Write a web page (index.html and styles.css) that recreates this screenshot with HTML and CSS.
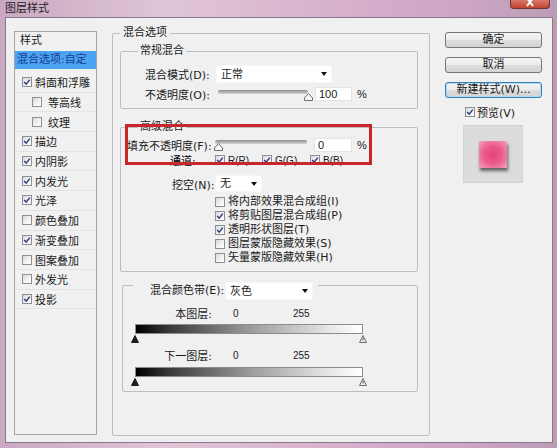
FILE: index.html
```html
<!DOCTYPE html>
<html lang="zh-CN">
<head>
<meta charset="utf-8">
<title>图层样式</title>
<link rel="stylesheet" href="styles.css">
</head>
<body>
<div class="window">
  <div class="titlebar">
    <span class="title">图层样式</span>
    <span class="close"><svg class="close-x" viewBox="0 0 12 8"><path d="M3 -2 L9 6 M9 -2 L3 6"/></svg></span>
  </div>
  <div class="client">
    <div class="styles-list">
      <div class="list-head">样式</div>
      <div class="list-sel">混合选项:自定</div>
      <div class="list-item"><span class="cb on"><svg viewBox="0 0 8 8"><path d="M1.2 4 L3.2 6.2 L6.8 1.6"/></svg></span>斜面和浮雕</div>
      <div class="list-item sub"><span class="cb"></span>等高线</div>
      <div class="list-item sub"><span class="cb"></span>纹理</div>
      <div class="list-item"><span class="cb on"><svg viewBox="0 0 8 8"><path d="M1.2 4 L3.2 6.2 L6.8 1.6"/></svg></span>描边</div>
      <div class="list-item"><span class="cb on"><svg viewBox="0 0 8 8"><path d="M1.2 4 L3.2 6.2 L6.8 1.6"/></svg></span>内阴影</div>
      <div class="list-item"><span class="cb on"><svg viewBox="0 0 8 8"><path d="M1.2 4 L3.2 6.2 L6.8 1.6"/></svg></span>内发光</div>
      <div class="list-item"><span class="cb on"><svg viewBox="0 0 8 8"><path d="M1.2 4 L3.2 6.2 L6.8 1.6"/></svg></span>光泽</div>
      <div class="list-item"><span class="cb"></span>颜色叠加</div>
      <div class="list-item"><span class="cb on"><svg viewBox="0 0 8 8"><path d="M1.2 4 L3.2 6.2 L6.8 1.6"/></svg></span>渐变叠加</div>
      <div class="list-item"><span class="cb"></span>图案叠加</div>
      <div class="list-item"><span class="cb"></span>外发光</div>
      <div class="list-item"><span class="cb on"><svg viewBox="0 0 8 8"><path d="M1.2 4 L3.2 6.2 L6.8 1.6"/></svg></span>投影</div>
    </div>

    <fieldset class="group main">
      <legend class="lg-main">混合选项</legend>

      <fieldset class="group normal">
        <legend class="lg-sub">常规混合</legend>
        <div class="normal-rows">
          <div class="row r18">
            <span class="lbl w71">混合模式(D):</span>
            <span class="select w116">正常<i class="arrow"></i></span>
          </div>
          <div class="row r15 mt3">
            <span class="lbl w71">不透明度(O):</span>
            <span class="slider s90 ml2">
              <span class="track"></span>
              <span class="thumbrow end"><svg class="thumb tr" viewBox="0 0 9 8"><path d="M4.5 0.5 L8.5 5 V7.5 H0.5 V5 Z"/></svg></span>
            </span>
            <span class="numbox w37">100</span>
            <span class="pct">%</span>
          </div>
        </div>
      </fieldset>

      <fieldset class="group adv">
        <legend class="lg-sub">高级混合</legend>
        <div class="row r14 fill-row">
          <span class="lbl w88">填充不透明度(F):</span>
          <span class="slider s92">
            <span class="track"></span>
            <span class="thumbrow"><svg class="thumb tl" viewBox="0 0 9 8"><path d="M4.5 0.5 L8.5 5 V7.5 H0.5 V5 Z"/></svg></span>
          </span>
          <span class="numbox w38">0</span>
          <span class="pct">%</span>
        </div>
        <div class="row r14 chan-row">
          <span class="lbl w45 strong">通道:</span>
          <span class="chan w47"><span class="cb on"><svg viewBox="0 0 8 8"><path d="M1.2 4 L3.2 6.2 L6.8 1.6"/></svg></span>R(R)</span>
          <span class="chan w48"><span class="cb on"><svg viewBox="0 0 8 8"><path d="M1.2 4 L3.2 6.2 L6.8 1.6"/></svg></span>G(G)</span>
          <span class="chan"><span class="cb on"><svg viewBox="0 0 8 8"><path d="M1.2 4 L3.2 6.2 L6.8 1.6"/></svg></span>B(B)</span>
        </div>
        <div class="row r17 ko-row">
          <span class="lbl w43">挖空(N):</span>
          <span class="select w47">无<i class="arrow"></i></span>
        </div>
        <div class="opts">
          <div class="opt"><span class="cb"></span>将内部效果混合成组(I)</div>
          <div class="opt"><span class="cb on"><svg viewBox="0 0 8 8"><path d="M1.2 4 L3.2 6.2 L6.8 1.6"/></svg></span>将剪贴图层混合成组(P)</div>
          <div class="opt"><span class="cb on"><svg viewBox="0 0 8 8"><path d="M1.2 4 L3.2 6.2 L6.8 1.6"/></svg></span>透明形状图层(T)</div>
          <div class="opt"><span class="cb"></span>图层蒙版隐藏效果(S)</div>
          <div class="opt"><span class="cb"></span>矢量蒙版隐藏效果(H)</div>
        </div>
      </fieldset>

      <fieldset class="group band">
        <legend class="lg-band">
          <span class="band-head">
            <span class="lbl w75">混合颜色带(E):</span>
            <span class="select w88">灰色<i class="arrow"></i></span>
          </span>
        </legend>
        <div class="row r14 band-row first">
          <span class="lbl rlbl">本图层:</span>
          <span class="val v0">0</span>
          <span class="val">255</span>
        </div>
        <div class="gbar"></div>
        <div class="bthumbs">
          <svg class="bthumb" viewBox="0 0 8 8"><path class="dark" d="M4 0.5 L7.5 7.5 H0.5 Z"/></svg>
          <svg class="bthumb" viewBox="0 0 8 8"><path class="light" d="M4 0.5 L7.5 7.5 H0.5 Z"/><path class="mark" d="M4 3 V5.5"/></svg>
        </div>
        <div class="row r14 band-row">
          <span class="lbl rlbl">下一图层:</span>
          <span class="val v0">0</span>
          <span class="val">255</span>
        </div>
        <div class="gbar"></div>
        <div class="bthumbs">
          <svg class="bthumb" viewBox="0 0 8 8"><path class="dark" d="M4 0.5 L7.5 7.5 H0.5 Z"/></svg>
          <svg class="bthumb" viewBox="0 0 8 8"><path class="light" d="M4 0.5 L7.5 7.5 H0.5 Z"/><path class="mark" d="M4 3 V5.5"/></svg>
        </div>
      </fieldset>
    </fieldset>

    <div class="side">
      <div class="btn">确定</div>
      <div class="btn">取消</div>
      <div class="btn default">新建样式(W)...</div>
      <div class="preview-check"><span class="cb on"><svg viewBox="0 0 8 8"><path d="M1.2 4 L3.2 6.2 L6.8 1.6"/></svg></span>预览(V)</div>
      <div class="preview-box"><div class="swatch"></div></div>
    </div>
  </div>
  <div class="annot"></div>
</div>
</body>
</html>
```

FILE: styles.css
```css
html, body {
  margin: 0;
  padding: 0;
  background: #ffffff;
}

body {
  font-family: "DejaVu Sans", "Noto Sans CJK SC", sans-serif;
  font-size: 11px;
  color: #1a1a1a;
}

.window {
  position: relative;
  width: 557px;
  height: 448px;
  display: flex;
  flex-direction: column;
  background: linear-gradient(90deg, #c9a9c1 0%, #e0c6d6 30%, #d6aecb 65%, #cba5c2 85%, #bb9cb6 100%);
  overflow: hidden;
}

/* ---------- title bar ---------- */
.titlebar {
  height: 17px;
  flex: none;
  display: flex;
  align-items: flex-start;
  padding-left: 5px;
}

.title {
  font-size: 11px;
  line-height: 17px;
  color: #2a2028;
}

.close {
  margin-left: auto;
  margin-right: 7px;
  width: 40px;
  height: 9px;
  box-sizing: border-box;
  border: 1px solid #6d3530;
  border-top: none;
  border-radius: 0 0 4px 4px;
  background: linear-gradient(#d9796a, #c0432f);
  display: flex;
  justify-content: center;
}

.close-x {
  width: 12px;
  height: 8px;
}

.close-x path {
  stroke: #ffffff;
  stroke-width: 2;
  fill: none;
}

/* ---------- client area ---------- */
.client {
  flex: 1;
  margin: 0 4px 5px 5px;
  border: 1px solid #85788a;
  background: #f0f0f0;
  display: flex;
  align-items: flex-start;
  padding-left: 8px;
}

/* ---------- style list ---------- */
.styles-list {
  margin-top: 13px;
  width: 83px;
  height: 404px;
  box-sizing: border-box;
  border: 1px solid #a6a6a6;
  background: #f1f1f1;
  display: flex;
  flex-direction: column;
  font-size: 11px;
}

.list-head {
  height: 19px;
  line-height: 18px;
  padding-left: 5px;
}

.list-sel {
  height: 18px;
  line-height: 18px;
  padding-left: 2px;
  background: #4ca3f3;
  color: #163c8e;
  margin-bottom: 4px;
  white-space: nowrap;
}

.list-item {
  height: 19.7px;
  box-sizing: border-box;
  border-bottom: 1px solid #e4e4e4;
  display: flex;
  align-items: center;
  gap: 3px;
  padding-left: 7px;
}

.list-item.sub {
  padding-left: 17px;
  gap: 6px;
}

/* ---------- checkbox ---------- */
.cb {
  flex: none;
  display: inline-flex;
  width: 8px;
  height: 8px;
  border: 1px solid #8e8f93;
  background: linear-gradient(135deg, #d6d8dc 0%, #f4f4f4 60%, #ffffff 100%);
}

.cb svg {
  width: 8px;
  height: 8px;
}

.cb svg path {
  fill: none;
  stroke: #2c3f7e;
  stroke-width: 1.5;
}

/* ---------- group boxes ---------- */
fieldset.group {
  margin: 0;
  padding: 0;
  border: 1px solid #bdbdbd;
  border-radius: 2px;
  min-width: 0;
}

.group legend {
  padding: 0;
  line-height: 14px;
  height: 14px;
}

.group.main {
  margin-top: 8px;
  margin-left: 15px;
  width: 318px;
  height: 410px;
  box-sizing: border-box;
  padding: 0 11px 0 7px;
}

.group .lg-main {
  padding: 0 3px;
}

.group .lg-sub {
  margin-left: 17px;
  padding: 0 2px;
}

.group.normal {
  margin-top: 4px;
  padding-bottom: 7px;
}

.normal-rows {
  padding: 7px 0 0 24px;
}

.row {
  display: flex;
  align-items: center;
  white-space: nowrap;
}

.r18 { height: 18px; }
.r17 { height: 17px; }
.r15 { height: 15px; }
.r14 { height: 14px; }
.mt3 { margin-top: 3px; }
.ml2 { margin-left: 2px; }

.lbl { flex: none; }
.w71 { width: 71px; }
.w88 { width: 88px; }
.w45 { width: 45px; }
.w43 { width: 43px; }
.w75 { width: 75px; }
.w47 { width: 47px; }
.w48 { width: 48px; }
.w116 { width: 116px; }
.w37 { width: 37px; }
.w38 { width: 38px; }

.strong { color: #000; }

/* select */
.select {
  flex: none;
  box-sizing: border-box;
  height: 18px;
  line-height: 17px;
  padding-left: 4px;
  background: #ffffff;
  border: 1px solid #f6f6f6;
  display: flex;
  align-items: center;
  justify-content: space-between;
  padding-right: 4px;
}

.select.w88 { width: 88px; }
.ko-row .select { height: 17px; }

.arrow {
  width: 0;
  height: 0;
  border-left: 3px solid transparent;
  border-right: 3px solid transparent;
  border-top: 4px solid #111;
}

/* slider */
.slider {
  flex: none;
  display: flex;
  flex-direction: column;
  height: 15px;
  box-sizing: border-box;
  padding-top: 4px;
}

.s90 { width: 90px; }
.s92 { width: 92px; height: 14px; padding-top: 2px; }

.track {
  height: 4px;
  border-radius: 2px;
  background: linear-gradient(#8a8a8a, #b8b8b8 60%, #d2d2d2);
}

.thumbrow {
  display: flex;
  margin-top: -1px;
}

.thumbrow.end { justify-content: flex-end; }

.thumb {
  width: 9px;
  height: 8px;
}

.thumb path {
  fill: #f6f6f6;
  stroke: #6e6e6e;
  stroke-width: 1;
}

.thumb.tr { margin-right: -5px; }
.thumb.tl { margin-left: -1px; }

.numbox {
  flex: none;
  box-sizing: border-box;
  height: 14px;
  margin-left: 7px;
  padding-left: 3px;
  background: #ffffff;
  border: 1px solid #e4e4e4;
  font-family: "Liberation Sans", sans-serif;
  font-size: 11px;
  line-height: 12px;
}

.pct {
  margin-left: 5px;
  font-family: "Liberation Sans", sans-serif;
  font-size: 11px;
}

/* advanced */
.group.adv {
  margin-top: 11px;
  padding-bottom: 6px;
}

.fill-row {
  margin-top: 4px;
  padding-left: 6px;
}

.chan-row {
  margin-top: 1px;
  padding-left: 49px;
}

.chan {
  flex: none;
  display: flex;
  align-items: center;
  gap: 3px;
  font-family: "Liberation Sans", sans-serif;
  font-size: 10px;
}

.ko-row {
  margin-top: 8px;
  padding-left: 51px;
}

.opts {
  margin-top: 3px;
  padding-left: 94px;
  font-size: 11px;
  line-height: 14px;
}

.opt {
  height: 14px;
  line-height: 14px;
  display: flex;
  align-items: center;
  gap: 3px;
  white-space: nowrap;
}

/* blend-if band */
.group.band {
  margin-top: 10px;
  margin-left: 2px;
  padding-bottom: 5px;
}

.group .lg-band {
  margin-left: 10px;
  padding: 0 5px 0 17px;
  height: 6px;
  line-height: 18px;
}

.band-head {
  display: flex;
  align-items: center;
  height: 18px;
  white-space: nowrap;
}

.band-row { margin-top: 5px; }
.band-row.first { margin-top: 18px; }

.rlbl {
  width: 89px;
  text-align: right;
}

.val {
  font-family: "Liberation Sans", sans-serif;
  font-size: 10px;
}

.v0 {
  margin-left: 21px;
  width: 60px;
}

.gbar {
  margin: 4px 0 0 12px;
  width: 228px;
  height: 10px;
  box-sizing: border-box;
  border: 1px solid #8c8c8c;
  background: linear-gradient(90deg, #000000 0%, #3a3a3a 15%, #9a9a9a 50%, #e6e6e6 85%, #ffffff 100%);
}

.band-row + .gbar { margin-top: 5px; }
.band-row.first + .gbar { margin-top: 4px; }

.bthumbs {
  margin: 1px 0 0 8px;
  width: 236px;
  height: 8px;
  display: flex;
  justify-content: space-between;
}

.bthumb {
  width: 8px;
  height: 8px;
}

.bthumb .dark {
  fill: #1e1e1e;
  stroke: #1e1e1e;
}

.bthumb .light {
  fill: #f0f0f0;
  stroke: #6a6a6a;
}

.bthumb .mark {
  stroke: #555;
  stroke-width: 1;
}

/* ---------- right side ---------- */
.side {
  margin-left: 15px;
  margin-top: 14px;
  width: 97px;
  display: flex;
  flex-direction: column;
}

.btn {
  height: 16px;
  box-sizing: border-box;
  border: 1px solid #767676;
  border-radius: 3px;
  background: linear-gradient(#f4f4f4 0%, #ececec 48%, #dddddd 52%, #d3d3d3 100%);
  text-align: center;
  line-height: 14px;
  font-size: 11px;
  margin-bottom: 9px;
  white-space: nowrap;
}

.btn.default {
  border-color: #3a7fb8;
  box-shadow: inset 0 0 0 1px #a9dcf6;
  margin-bottom: 0;
}

.preview-check {
  margin-top: 7px;
  height: 14px;
  padding-left: 20px;
  display: flex;
  align-items: center;
  gap: 2px;
  font-size: 11px;
}

.preview-box {
  margin: 6px 0 0 18px;
  width: 60px;
  height: 58px;
  box-sizing: border-box;
  border: 1px solid #d2d2d2;
  background: #dcdcdc;
  display: flex;
  align-items: center;
  justify-content: center;
}

.swatch {
  width: 28px;
  height: 27px;
  background: radial-gradient(circle at 50% 50%, #e6457a 0%, #ea5a88 45%, #f4a2bd 100%);
  box-shadow: 1px 3px 3px rgba(0, 0, 0, 0.55);
}

/* ---------- red annotation rectangle ---------- */
.annot {
  position: absolute;
  left: 125px;
  top: 124px;
  width: 247px;
  height: 41px;
  box-sizing: border-box;
  border: 3px solid #c9262b;
}
```
